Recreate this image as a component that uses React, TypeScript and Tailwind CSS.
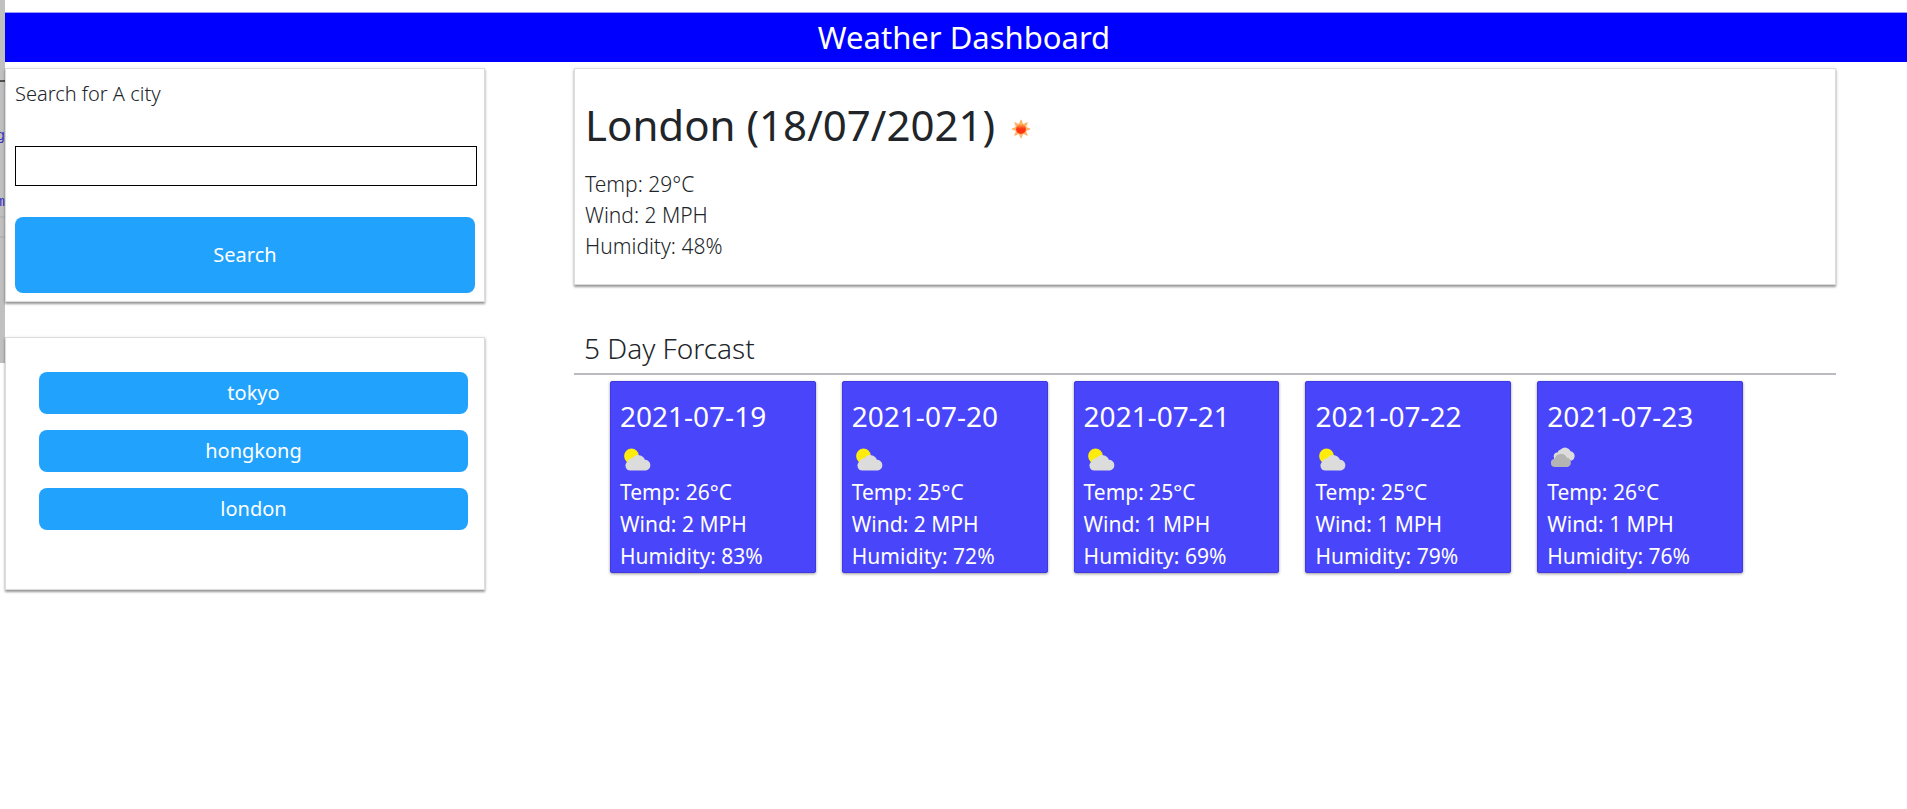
import React from "react";

type Sky = "partly" | "cloudy";

interface Day {
  date: string;
  sky: Sky;
  temp: number;
  wind: number;
  humidity: number;
}

const days: Day[] = [
  { date: "2021-07-19", sky: "partly", temp: 26, wind: 2, humidity: 83 },
  { date: "2021-07-20", sky: "partly", temp: 25, wind: 2, humidity: 72 },
  { date: "2021-07-21", sky: "partly", temp: 25, wind: 1, humidity: 69 },
  { date: "2021-07-22", sky: "partly", temp: 25, wind: 1, humidity: 79 },
  { date: "2021-07-23", sky: "cloudy", temp: 26, wind: 1, humidity: 76 },
];

const cities = ["tokyo", "hongkong", "london"];

const panel =
  "border border-[#dcdcdc] bg-white shadow-[0_2px_2px_rgba(0,0,0,0.35),0_1px_4px_rgba(0,0,0,0.12)]";

function SunIcon() {
  return (
    <svg viewBox="0 0 20 20" className="h-5 w-5" aria-hidden="true">
      <defs>
        <linearGradient id="sun" x1="0" y1="0" x2="0" y2="1">
          <stop offset="0" stopColor="#ffb050" />
          <stop offset="0.5" stopColor="#ff3010" />
          <stop offset="1" stopColor="#ff3a10" />
        </linearGradient>
      </defs>
      {[0, 45, 90, 135, 180, 225, 270, 315].map((angle) => (
        <path key={angle} d="M7.8 5.4 L9.5 0.8 H10.5 L12.2 5.4 Z" fill="#fcb56c" transform={`rotate(${angle} 10 10)`} />
      ))}
      <circle cx="10" cy="10" r="5.8" fill="#fdb467" />
      <circle cx="10" cy="10" r="4.9" fill="url(#sun)" />
    </svg>
  );
}

function SkyIcon({ sky }: { sky: Sky }) {
  if (sky === "cloudy") {
    return (
      <svg viewBox="0 0 32 32" className="h-8 w-8" aria-hidden="true">
        <path d="M11 16.500a4 4 0 0 1-.5-8A4.800 4.800 0 0 1 14 5.200a6 6 0 0 1 9.600 2 5 5 0 0 1 1.400 9.300Z" fill="#dcdcdc" />
        <path d="M8 23a4 4 0 0 1-.2-8 6.300 6.300 0 0 1 11.900-1.500 4.900 4.900 0 0 1 .8 9.500Z" fill="#b4b4b4" />
      </svg>
    );
  }
  return (
    <svg viewBox="0 0 32 32" className="h-8 w-8" aria-hidden="true">
      <circle cx="11.500" cy="12" r="7.400" fill="#ffec0a" />
      <path d="M10.500 26.500a4.800 4.800 0 0 1-3-8.700A5 5 0 0 1 12.500 14.200a7 7 0 0 1 12.400 1.600 5.400 5.400 0 0 1 1.100 10.700Z" fill="#dcdcdc" />
    </svg>
  );
}

export default function App() {
  return (
    <div className="flex min-h-screen items-start bg-white font-['Noto_Sans',sans-serif] text-[20px] text-[#212529]">
      <aside
        aria-hidden="true"
        className="flex h-[363px] w-[5px] shrink-0 flex-col items-end overflow-hidden bg-[#c0c0c0] pt-20 font-['Liberation_Mono',monospace] text-[14px] leading-5 text-[#3a2fc0]"
      >
        <div className="h-[2px] w-full shrink-0 bg-[#505050]" />
        <span className="mt-11 underline">g</span>
        <span className="mt-[46px]">m</span>
        <div className="mt-1 h-[22px] w-full border-y-2 border-[#b5b5b5]" />
      </aside>

      <div className="min-w-0 flex-1 pt-3">
        <header className="border-t border-[#9a9aff] bg-[#0000ff] pl-4 text-center">
          <h1 className="text-[31px] leading-[49px] text-white">Weather Dashboard</h1>
        </header>

        <main className="grid grid-cols-[480fr_1262fr] items-start gap-x-[89px] pt-[6px] pr-[71px]">
          <div className="flex flex-col gap-[35px]">
            <form className={`${panel} flex flex-col px-[9px] pt-[9px] pb-2`} onSubmit={(e) => e.preventDefault()}>
              <label htmlFor="city" className="leading-8 font-light">
                Search for A city
              </label>
              <input id="city" type="text" className="mt-9 -mr-[2px] h-10 border border-black bg-white px-2 outline-none" />
              <button type="submit" className="mt-[31px] h-[76px] rounded-lg bg-[#21a3fd] text-white">
                Search
              </button>
            </form>

            <section aria-label="Recent cities" className={`${panel} flex flex-col gap-4 pt-[34px] pr-4 pb-[59px] pl-[33px]`}>
              {cities.map((city) => (
                <button key={city} type="button" className="h-[42px] rounded-lg bg-[#21a3fd] text-white">
                  {city}
                </button>
              ))}
            </section>
          </div>

          <div>
            <section className={`${panel} px-[10px] pt-7 pb-[22px]`}>
              <div className="flex items-center gap-4">
                <h2 className="text-[42px] leading-[56px]">London (18/07/2021)</h2>
                <div className="pt-2">
                  <SunIcon />
                </div>
              </div>
              <div className="mt-4 text-[21px] leading-[31px] font-light">
                <p>Temp: 29°C</p>
                <p>Wind: 2 MPH</p>
                <p>Humidity: 48%</p>
              </div>
            </section>

            <section>
              <h3 className="mt-[42px] border-b-2 border-[#b9bbbe] pb-1 pl-[10px] text-[28px] leading-[42px] font-light">
                5 Day Forcast
              </h3>
              <div className="mt-[6px] grid grid-cols-5 gap-[26px] pr-[93px] pl-9">
                {days.map((day) => (
                  <article
                    key={day.date}
                    className="rounded-xs border border-[#4038e0] bg-[#4945fb] px-[9px] pt-4 text-white shadow-[0_1px_3px_rgba(0,0,0,0.4)]"
                  >
                    <h4 className="text-[28px] leading-9">{day.date}</h4>
                    <div className="h-[42px] pt-[10px]">
                      <SkyIcon sky={day.sky} />
                    </div>
                    <div className="text-[21px] leading-8">
                      <p>Temp: {day.temp}°C</p>
                      <p>Wind: {day.wind} MPH</p>
                      <p>Humidity: {day.humidity}%</p>
                    </div>
                  </article>
                ))}
              </div>
            </section>
          </div>
        </main>
      </div>
    </div>
  );
}
